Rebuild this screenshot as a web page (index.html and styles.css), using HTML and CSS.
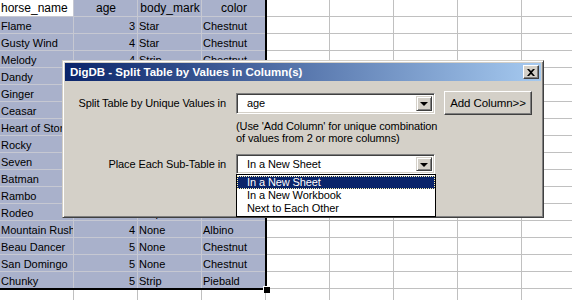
FILE: index.html
```html
<!DOCTYPE html>
<html lang="en">
<head>
<meta charset="UTF-8" />
<title>DigDB - Split Table</title>
<link rel="stylesheet" href="styles.css">
</head>
<body>

<table class="sheet">
  <colgroup>
    <col class="c-name"><col><col><col><col><col><col><col><col>
  </colgroup>
  <tr class="head"><td class="active">horse_name</td><td class="sel center">age</td><td class="sel center">body_mark</td><td class="sel center">color</td><td></td><td></td><td></td><td></td><td></td></tr>
  <tr><td class="sel">Flame</td><td class="sel num">3</td><td class="sel">Star</td><td class="sel">Chestnut</td><td></td><td></td><td></td><td></td><td></td></tr>
  <tr><td class="sel">Gusty Wind</td><td class="sel num">4</td><td class="sel">Star</td><td class="sel">Chestnut</td><td></td><td></td><td></td><td></td><td></td></tr>
  <tr><td class="sel">Melody</td><td class="sel num">4</td><td class="sel">Strip</td><td class="sel">Chestnut</td><td></td><td></td><td></td><td></td><td></td></tr>
  <tr><td class="sel">Dandy</td><td class="sel num">4</td><td class="sel">Star</td><td class="sel">Bay</td><td></td><td></td><td></td><td></td><td></td></tr>
  <tr><td class="sel">Ginger</td><td class="sel num">4</td><td class="sel">None</td><td class="sel">Bay</td><td></td><td></td><td></td><td></td><td></td></tr>
  <tr><td class="sel">Ceasar</td><td class="sel num">4</td><td class="sel">Blaze</td><td class="sel">Grey</td><td></td><td></td><td></td><td></td><td></td></tr>
  <tr><td class="sel">Heart of Stone</td><td class="sel num">4</td><td class="sel">Blaze</td><td class="sel">Black</td><td></td><td></td><td></td><td></td><td></td></tr>
  <tr><td class="sel">Rocky</td><td class="sel num">4</td><td class="sel">None</td><td class="sel">Bay</td><td></td><td></td><td></td><td></td><td></td></tr>
  <tr><td class="sel">Seven</td><td class="sel num">4</td><td class="sel">Star</td><td class="sel">Grey</td><td></td><td></td><td></td><td></td><td></td></tr>
  <tr><td class="sel">Batman</td><td class="sel num">4</td><td class="sel">Strip</td><td class="sel">Black</td><td></td><td></td><td></td><td></td><td></td></tr>
  <tr><td class="sel">Rambo</td><td class="sel num">4</td><td class="sel">None</td><td class="sel">Bay</td><td></td><td></td><td></td><td></td><td></td></tr>
  <tr><td class="sel">Rodeo</td><td class="sel num">4</td><td class="sel">Strip</td><td class="sel">Chestnut</td><td></td><td></td><td></td><td></td><td></td></tr>
  <tr><td class="sel">Mountain Rush</td><td class="sel num">4</td><td class="sel">None</td><td class="sel">Albino</td><td></td><td></td><td></td><td></td><td></td></tr>
  <tr><td class="sel">Beau Dancer</td><td class="sel num">5</td><td class="sel">None</td><td class="sel">Chestnut</td><td></td><td></td><td></td><td></td><td></td></tr>
  <tr><td class="sel">San Domingo</td><td class="sel num">5</td><td class="sel">None</td><td class="sel">Chestnut</td><td></td><td></td><td></td><td></td><td></td></tr>
  <tr><td class="sel">Chunky</td><td class="sel num">5</td><td class="sel">Strip</td><td class="sel">Piebald</td><td></td><td></td><td></td><td></td><td></td></tr>
  <tr><td></td><td></td><td></td><td></td><td></td><td></td><td></td><td></td><td></td></tr>
</table>

<div class="sel-frame"><span class="fill-handle"></span></div>

<div class="dialog">
  <div class="titlebar">
    <span class="title">DigDB - Split Table by Values in Column(s)</span>
    <button class="close" type="button">
      <svg width="8" height="7" viewBox="0 0 8 7"><path d="M0 0h2l2 2 2-2h2L5 3.5 8 7H6L4 5 2 7H0l3-3.5z" fill="#000"/></svg>
    </button>
  </div>

  <div class="dlg-body">
    <div class="row">
      <label class="lbl">Split Table by Unique Values in</label>
      <div class="combo">
        <span class="combo-text">age</span>
        <span class="arrow"><i></i></span>
      </div>
      <button class="btn" type="button">Add Column&gt;&gt;</button>
    </div>

    <p class="note">(Use 'Add Column' for unique combination<br>of values from 2 or more columns)</p>

    <div class="row row-place">
      <label class="lbl">Place Each Sub-Table in</label>
      <div class="combo-wrap">
        <div class="combo">
          <span class="combo-text">In a New Sheet</span>
          <span class="arrow"><i></i></span>
        </div>
        <ul class="droplist">
          <li class="picked">In a New Sheet</li>
          <li>In a New Workbook</li>
          <li>Next to Each Other</li>
        </ul>
      </div>
    </div>
  </div>
</div>

</body>
</html>
```

FILE: styles.css
```css
body {
  margin: 0;
  width: 572px;
  height: 300px;
  overflow: hidden;
  position: relative;
  background: #fff;
  font-family: "Liberation Sans", Arial, sans-serif;
}

/* spreadsheet */
.sheet {
  border-collapse: separate;
  border-spacing: 0;
  table-layout: fixed;
  width: 586px;
  font-size: 11px;
  color: #000;
}
.sheet col { width: 64px; }
.sheet col.c-name { width: 74px; }
.sheet td {
  box-sizing: border-box;
  height: 17px;
  padding: 2px 2px 0 1px;
  line-height: 14px;
  border-right: 1px solid #c0c0c0;
  border-bottom: 1px solid #c0c0c0;
  white-space: nowrap;
  overflow: hidden;
}
.sheet .head td {
  font-size: 12px;
  padding: 1px 0 0 1px;
  line-height: 15px;
}
.sheet td.sel {
  background: #a9b1cb;
  border-color: #c6c8d2;
}
.sheet td.active {
  background: #fff;
  border-color: #c6c8d2;
}
.sheet td.center { text-align: center; }
.sheet td.num { text-align: right; }

.sel-frame {
  position: absolute;
  left: -3px;
  top: -3px;
  width: 266px;
  height: 289px;
  border: 2px solid #000;
}
.fill-handle {
  position: absolute;
  right: -5px;
  bottom: -5px;
  width: 6px;
  height: 6px;
  background: #000;
  border: 1px solid #fff;
  border-width: 1px 0 0 1px;
}

/* dialog */
.dialog {
  position: absolute;
  left: 62px;
  top: 60px;
  width: 482px;
  height: 158px;
  box-sizing: border-box;
  background: #d4d0c8;
  border: 1px solid;
  border-color: #d4d0c8 #404040 #404040 #d4d0c8;
  box-shadow: inset 1px 1px 0 #fff, inset -1px -1px 0 #808080;
  padding: 2px;
  font-size: 11px;
  letter-spacing: -0.1px;
  color: #000;
}
.titlebar {
  height: 18px;
  display: flex;
  align-items: center;
  justify-content: space-between;
  padding: 0 2px 0 5px;
  background: linear-gradient(to right, #0a246a, #a6caf0);
}
.title {
  color: #fff;
  font-weight: bold;
  font-size: 11.5px;
  letter-spacing: 0;
}
.close {
  width: 16px;
  height: 14px;
  padding: 0;
  display: flex;
  align-items: center;
  justify-content: center;
  background: #d4d0c8;
  border: 1px solid;
  border-color: #fff #404040 #404040 #fff;
  box-shadow: inset -1px -1px 0 #808080;
}

.dlg-body {
  padding: 10px 0 0;
}
.row {
  display: flex;
  align-items: center;
}
.lbl {
  width: 161px;
  padding-right: 10px;
  text-align: right;
  flex: none;
}
.combo {
  box-sizing: border-box;
  width: 199px;
  height: 21px;
  display: flex;
  align-items: center;
  justify-content: space-between;
  background: #fff;
  border: 1px solid;
  border-color: #808080 #fff #fff #808080;
  box-shadow: inset 1px 1px 0 #404040, inset -1px -1px 0 #d4d0c8;
  padding: 2px 2px 2px 10px;
}
.arrow {
  box-sizing: border-box;
  width: 16px;
  height: 100%;
  display: flex;
  align-items: center;
  justify-content: center;
  background: #d4d0c8;
  border: 1px solid;
  border-color: #d4d0c8 #404040 #404040 #d4d0c8;
  box-shadow: inset 1px 1px 0 #fff, inset -1px -1px 0 #808080;
}
.arrow i {
  width: 0;
  height: 0;
  border-left: 4px solid transparent;
  border-right: 4px solid transparent;
  border-top: 4px solid #000;
  margin-top: 1px;
}
.btn {
  box-sizing: border-box;
  width: 88px;
  height: 24px;
  margin-left: 9px;
  padding: 0;
  font-family: inherit;
  font-size: 11.5px;
  letter-spacing: -0.1px;
  color: #000;
  background: #d4d0c8;
  border: 1px solid;
  border-color: #fff #404040 #404040 #fff;
  box-shadow: inset -1px -1px 0 #808080;
}
.note {
  margin: 5px 0 0 171px;
  line-height: 12px;
}
.row-place {
  margin-top: 10px;
}
.combo-wrap {
  position: relative;
}
.row-place .combo {
  height: 20px;
}
.droplist {
  position: absolute;
  left: 0;
  top: 20px;
  width: 200px;
  box-sizing: border-box;
  margin: 0;
  padding: 1px 0;
  list-style: none;
  background: #fff;
  border: 1px solid #000;
}
.droplist li {
  height: 13px;
  line-height: 13px;
  padding-left: 10px;
}
.droplist li.picked {
  background: #0a246a;
  color: #fff;
  outline: 1px dotted #fff6b0;
  outline-offset: -1px;
}
```
